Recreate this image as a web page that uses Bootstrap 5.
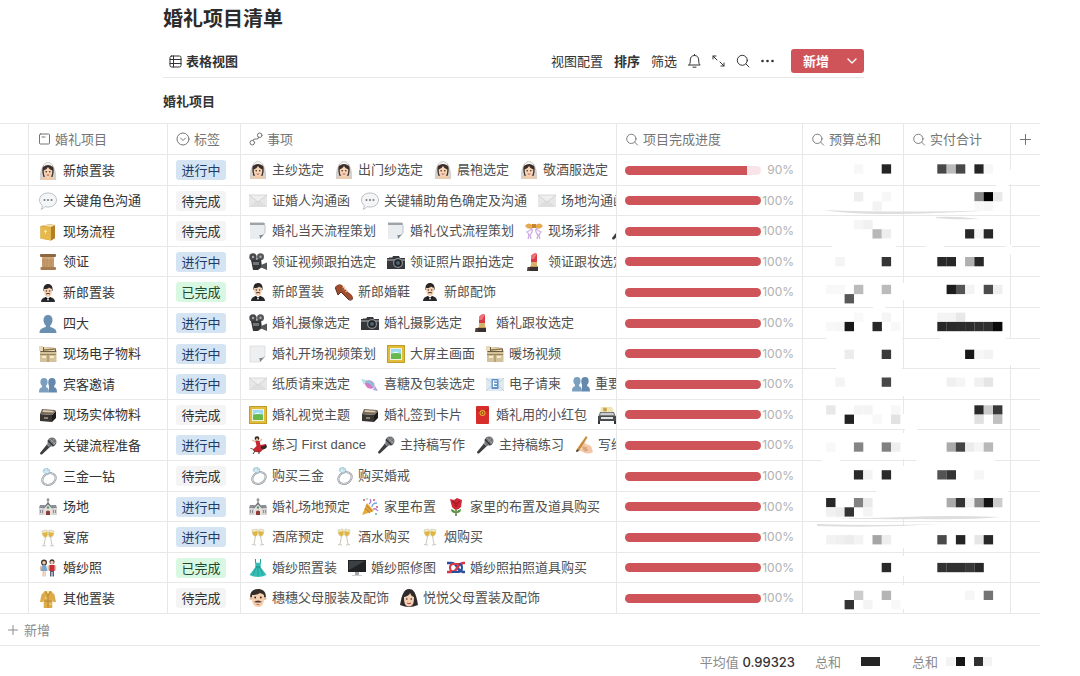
<!DOCTYPE html>
<html lang="zh-CN">
<head>
<meta charset="utf-8">
<meta name="viewport" content="width=device-width, initial-scale=1">
<title>婚礼项目清单</title>
<link href="https://cdn.jsdelivr.net/npm/bootstrap@5.3.0/dist/css/bootstrap.min.css" rel="stylesheet">
<style>
  :root { --line: #e8e8e8; --brand: #cf5459; }
  body { font: 400 13px/20px "Inter", "Noto Sans CJK SC", sans-serif; color: #333; background: #fff; overflow-x: hidden; }
  .page-head { padding: 5px 216px 12px 163px; }
  .page-title { font-size: 20px; line-height: 28px; font-weight: 700; color: #2b2b2b; margin-bottom: 12px; }
  .toolbar { height: 33px; border-bottom: 1px solid var(--line); }
  .tools { gap: 11px; }
  .tool, .view-tab { border: 0; background: none; padding: 0; color: #333; white-space: nowrap; }
  .view-tab { font-weight: 700; padding-left: 6px; gap: 4px; }
  .tool svg, .view-tab svg { display: block; }
  .ln { fill: none; stroke: currentColor; stroke-linecap: round; stroke-linejoin: round; }
  .add-group { height: 24px; margin-left: 6px; }
  .add-group .btn { --bs-btn-font-size: 13px; --bs-btn-line-height: 20px; --bs-btn-color: #fff; --bs-btn-bg: var(--brand); --bs-btn-hover-bg: #bd484d; --bs-btn-hover-color: #fff; --bs-btn-border-width: 0; --bs-btn-border-radius: 3px; padding: 0; font-weight: 700; }
  .add-main { width: 50px; }
  .add-more { width: 24px; }
  .sub-title { font-size: 13px; line-height: 20px; font-weight: 700; margin: 13px 0 0; }
  .sheet { margin-right: 40px; position: relative; }
  .grid-table { width: 100%; table-layout: fixed; border-collapse: separate; border-spacing: 0; border-top: 1px solid var(--line); }
  .grid-table th, .grid-table td { padding: 0 8px; border-bottom: 1px solid var(--line); overflow: hidden; white-space: nowrap; vertical-align: middle; }
  .grid-table thead th, .grid-table tbody td { border-right: 1px solid var(--line); }
  .grid-table thead th:last-child, .grid-table tbody td:last-child { border-right: 0; }
  .grid-table th { height: 31px; font-weight: 400; color: #757575; }
  .grid-table td { height: 31px; }
  .grid-table tbody tr:nth-child(5n+2) td, .grid-table tbody tr:nth-child(5n+4) td { height: 30px; }
  .grid-table .name-cell, .grid-table thead .name-cell { padding-left: 10px; }
  .emo { width: 18px; height: 18px; flex: none; display: block; }
  .entry { gap: 5px; color: #505050; font-family: "Liberation Sans", "Noto Sans CJK SC", sans-serif; }
  .entry-row { gap: 11px; }
  .name-cell .entry { gap: 6px; color: #333; padding-top: 1px; }
  .tag { width: 50px; border-radius: 3px; text-align: center; }
  .tag-doing { background: #d5e4f3; color: #1d3c69; }
  .tag-todo { background: #f4f4f4; }
  .tag-done { background: #d9f8e2; color: #21492f; }
  .meter { height: 9px; width: 136px; border-radius: 5px; background: #f8e4e9; }
  .meter .progress-bar { background: var(--brand); }
  .pct { font-size: 12px; color: #b0b0b0; }
  .grid-table tfoot td { border-bottom: 0; color: #8b8b8b; height: 31px; }
  .grid-table tfoot .add-row td { border-bottom: 1px solid var(--line); height: 32px; }
  .add-line { gap: 6px; color: #8b8b8b; }
  .total { color: #333; font-weight: 500; }
  .mosaic { position: absolute; top: 31px; right: 0; pointer-events: none; }
</style>
</head>
<body>

<svg width="0" height="0" class="position-absolute" aria-hidden="true">
  <symbol id="bride" viewBox="0 0 18 18"><path d="M1 18C0 8 4 0 9 0s9 8 8 18z" fill="#d3d1ce"/><path d="M3.500 11C2.500 3 6 1.500 9 1.500s6.500 1.500 5.500 9.500l-1 4h-9z" fill="#3b2e2b"/><path d="M4 5q5-4 10 0l-1-2.500Q9-1 5 2.500z" fill="#f3f3f3"/><path d="M3 18q0-3 4-4h4q4 1 4 4z" fill="#eecbab"/><path d="M4.700 8.500q3.300-1 4.300-3.500 1 2.500 4.300 3.500c0 5-1.300 7-4.300 7s-4.300-2-4.300-7z" fill="#f6d3b4"/><circle cx="7.200" cy="9.800" r=".8" fill="#3a2a24"/><circle cx="10.800" cy="9.800" r=".8" fill="#3a2a24"/><path d="M7.700 12.800q1.300 1 2.600 0" stroke="#c3554d" fill="none"/></symbol>
  <symbol id="speech" viewBox="0 0 18 18"><path d="M9 1c5 0 8.500 3 8.500 7s-3.500 7-8.500 7c-1 0-2 0-3-.4Q4.500 17 2 17.300q1.500-1.500 1.200-4C1.500 12 .5 10 .5 8 .5 4 4 1 9 1z" fill="#f4f5f6" stroke="#bcc0c4"/><circle cx="5.500" cy="8" r="1" fill="#777"/><circle cx="9" cy="8" r="1" fill="#777"/><circle cx="12.500" cy="8" r="1" fill="#777"/></symbol>
  <symbol id="ledger" viewBox="0 0 18 18"><path d="M1.500 3l10-2L16 2.500V15l-4 2.500L1.500 15.500z" fill="#c8922e"/><path d="M1.500 3L12 4.500v13L1.500 15.500z" fill="#e5b94e"/><path d="M12 4.500L16 2.500V15l-4 2.500z" fill="#b67e25"/><path d="M3 2.700l8.500-1.500L15 2.600l-3.200 1.300z" fill="#f3e3b3"/><path d="M5 8l3 .5M6.500 7v3.500" stroke="#fbe9a7"/></symbol>
  <symbol id="scroll" viewBox="0 0 18 18"><path d="M3 3h12v12H3z" fill="#c59a6b"/><path d="M5 3v12M8 3v12M12 3v12" stroke="#b98c5d"/><rect x="1" y="1" width="16" height="3" rx="1" fill="#8f6742"/><rect x="1.500" y="14" width="15.500" height="3" rx="1" fill="#a77b50"/><path d="M3 5h12" stroke="#dbb78b"/></symbol>
  <symbol id="groom" viewBox="0 0 18 18"><path d="M2 18q0-4 5-5h4q5 1 5 5z" fill="#26282b"/><path d="M7 13h4l-2 4z" fill="#fff"/><path d="M9 14.500L6.500 13v3.200zM9 14.500l2.500-1.500v3.200z" fill="#111"/><path d="M4.500 7C4 2 6 0 9 0s5 2 4.500 7z" fill="#2c2724"/><path d="M5 5q4 0 5-1.500Q12 4.500 13 5c0 5-1 8-4 8S5 10 5 5z" fill="#f1cfb0"/><circle cx="7.300" cy="7" r=".7" fill="#333"/><circle cx="10.700" cy="7" r=".7" fill="#333"/><path d="M7 10q2-1.300 4 0" stroke="#54342a" fill="none"/></symbol>
  <symbol id="bust" viewBox="0 0 18 18"><path d="M9 0c3 0 4.500 2 4.500 5 0 2.500-1 4.500-2.300 5.500v1.500c3 1 6.300 1.500 6.300 6H.5c0-4.500 3.300-5 6.300-6v-1.500C5.500 9.500 4.500 7.500 4.500 5 4.500 2 6 0 9 0z" fill="#6b8fb1"/></symbol>
  <symbol id="cardbox" viewBox="0 0 18 18"><path d="M1 7h16.500v10H1z" fill="#d3c19a"/><path d="M1 7l3-5 12.500 1 1 4z" fill="#6b5b43"/><path d="M0 1h4v5H0zM5 2l11 1v3H5z" fill="#e9dbb9"/><path d="M1 9.500h16M9 9v8" stroke="#9a8458"/><path d="M11 12h4M3 12h4" stroke="#f5ecd1" stroke-width="2"/><path d="M5 5l11-1" stroke="#907748" stroke-width="1.500"/></symbol>
  <symbol id="busts" viewBox="0 0 18 18"><path d="M13 2c2.500 0 3.700 1.600 3.700 4 0 1.800-.6 3-1.500 3.800v1.400c2 .6 2.800 1.500 2.800 5.300h-8V9.800C9.500 9 9.300 7.800 9.300 6c0-2.400 1.200-4 3.700-4z" fill="#6489ac"/><path d="M5 2c2.400 0 3.600 1.600 3.600 4 0 1.800-.6 3-1.500 3.800v1.400c2 .6 2.900 1.500 2.900 5.300H0c0-3.800 1-4.700 3-5.300V9.800C2 9 1.400 7.800 1.400 6 1.400 3.600 2.600 2 5 2z" fill="#7b9fbf"/></symbol>
  <symbol id="filebox" viewBox="0 0 18 18"><path d="M1 8l12 1v7L1 15z" fill="#393531"/><path d="M13 9l4-4v7l-4 4z" fill="#1f1d1b"/><path d="M1 8l2-5 13 1 1 1-4 4z" fill="#75695a"/><path d="M4 4l11 1-1 1.500L3.500 6z" fill="#d9ccb0"/><path d="M5 11h4v2H5z" fill="#89837a"/></symbol>
  <symbol id="mic" viewBox="0 0 18 18"><path d="M9.500 5.500l3 3L3 17.500Q1 18 1 16z" fill="#3c3d40"/><path d="M8 7l2.500 2.500" stroke="#999" stroke-width="1.500"/><circle cx="13" cy="5" r="4.500" fill="#717477"/><path d="M9.500 4l5 5M11 2l5.500 5.500M10 7.500L15.500 2M12.500 9L17 4.500" stroke="#b2b5b8" stroke-width=".6"/><path d="M9 3.500l5.500 5.500" stroke="#303235" stroke-width="1.500"/></symbol>
  <symbol id="ring" viewBox="0 0 18 18"><ellipse cx="10" cy="11" rx="7" ry="5.500" transform="rotate(-30 10 11)" fill="none" stroke="#8e9499" stroke-width="2"/><ellipse cx="10" cy="11" rx="7" ry="5.500" transform="rotate(-30 10 11)" fill="none" stroke="#dfe3e6" stroke-width=".8"/><path d="M5 1l4-.5 2 2L9 6.500 4 4z" fill="#b9dce9" stroke="#86b4c8" stroke-width=".6"/><path d="M4 4h6M7 1v4" stroke="#f2fbff" stroke-width=".6"/></symbol>
  <symbol id="church" viewBox="0 0 18 18"><path d="M9 0v6M7.500 2h3" stroke="#777"/><path d="M0 10h5v7H0zM13 10h5v7h-5z" fill="#d8d4d1"/><path d="M0 10l1-3h5l-1 3zM13 10l-1-3h5l1 3z" fill="#8b8f97"/><path d="M5 17V9l4-4 4 4v8z" fill="#e6e1de"/><path d="M4 10l5-6 5 6-1 .5-4-4-4 4z" fill="#747985"/><path d="M7 17v-3.500q2-2 4 0V17z" fill="#8e3e37"/><circle cx="9" cy="9.500" r="1.200" fill="#596"/><path d="M1.500 12v3M3.500 12v3M14.500 12v3M16.500 12v3" stroke="#8a8f9c"/></symbol>
  <symbol id="cheers" viewBox="0 0 18 18"><path d="M3 2l5-1q1.500 6-1 7.500Q3.500 9 3 2zM15 2l-5-1Q8.500 7 11 8.500 14.500 9 15 2z" fill="#f5edc5" stroke="#c8c2a5" stroke-width=".6"/><path d="M3.300 4l5-1q.5 4.500-1.500 5.200Q4 8 3.300 4zM14.700 4l-5-1q-.5 4.500 1.500 5.200Q14 8 14.700 4z" fill="#dfb440"/><path d="M6.500 8.500L5 16M3 16.500l4 .5M11.500 8.500L13 16M15 16.500l-4 .5" stroke="#cdc7ba" fill="none"/></symbol>
  <symbol id="couple" viewBox="0 0 18 18"><circle cx="5" cy="3.500" r="3" fill="#423832"/><circle cx="5" cy="3.800" r="1.800" fill="#edc8aa"/><path d="M3 6h4l1.500 6h-7z" fill="#7ba7cb"/><path d="M3.500 12h1.300v5.500H3.500zM5.500 12h1.200v5.500H5.500z" fill="#e3b99c"/><circle cx="13" cy="2.800" r="2.500" fill="#423832"/><circle cx="13" cy="3.500" r="1.700" fill="#edc8aa"/><path d="M10.300 6h5.400v6h-5.400z" fill="#c72f37"/><path d="M11 12h4v5.500h-1.500V13h-1v4.500H11z" fill="#51617a"/><path d="M9.200 6.500v5M16.500 6.500v5M1.700 7v4" stroke="#e3b99c" stroke-width="1.300"/></symbol>
  <symbol id="robe" viewBox="0 0 18 18"><path d="M6 1h6l3.500 3.500L17 12h-3l-.7-2v8H4.700v-8L4 12H1l1.500-7.500z" fill="#dcac4b"/><path d="M6 1l3 5 3-5M9 6v12M5 11h8" stroke="#b07f2c" fill="none" stroke-width=".8"/><path d="M7 1h4L9 4z" fill="#f4d792"/><circle cx="6.500" cy="8" r="1" fill="#f2d078"/><circle cx="11.500" cy="14" r="1" fill="#f2d078"/></symbol>
  <symbol id="mail" viewBox="0 0 18 18"><path d="M0 3h18v12H0z" fill="#e7e7e8"/><path d="M0 15l7-6h4l7 6z" fill="#dededf"/><path d="M0 3l9 7 9-7z" fill="#efefef" stroke="#c9cacc" stroke-width=".7"/></symbol>
  <symbol id="notepad" viewBox="0 0 18 18"><path d="M1 2h15v10l-5 5H1z" fill="#e9edf0"/><path d="M16 11l-5 6q0-3-1-4 3 1 6-2z" fill="#768593"/><path d="M1 1h15v2H1z" fill="#b0b7bc"/><path d="M2 0v3M4 0v3M6 0v3M8 0v3M10 0v3M12 0v3M14 0v3" stroke="#6f777d" stroke-width=".6"/><path d="M16 3v8" stroke="#bcc3c8"/></symbol>
  <symbol id="page" viewBox="0 0 18 18"><path d="M1 1h15v11l-5 5H1z" fill="#eeeff0" stroke="#cfd1d3" stroke-width=".6"/><path d="M16 11l-5 6q0-3-1-4 3 1 6-2z" fill="#777e86"/></symbol>
  <symbol id="ribbon" viewBox="0 0 18 18"><path d="M9 4Q3-1 0 4l2 2q3 2 7-1 4 3 7 1l2-2Q15-1 9 4z" fill="#e7a94d"/><path d="M7 2h4v4H7z" fill="#c7862d"/><path d="M7 6q-2 3-5 4 3 2 1 7M7 7q1 3-2 6l1 4M11 6q2 3 5 4-3 2-1 7M11 7q-1 3 2 6l-1 4" stroke="#cdaee4" fill="none" stroke-width="1.300"/></symbol>
  <symbol id="movie" viewBox="0 0 18 18"><circle cx="4" cy="4" r="3.700" fill="#47494c"/><circle cx="11.500" cy="3.700" r="3.500" fill="#55575a"/><circle cx="4" cy="4" r="1.200" fill="#aaa"/><circle cx="11.500" cy="3.700" r="1.200" fill="#aaa"/><path d="M2 7l10-1 1 8-4 3H4z" fill="#353739"/><path d="M12 12l6-2.500V17l-6-2.500z" fill="#55585b"/><path d="M4 9h6v3H4z" fill="#717477"/></symbol>
  <symbol id="camera" viewBox="0 0 18 18"><path d="M0 5h5l1-2h6l1 2h5v11H0z" fill="#35373a"/><path d="M0 6h18v2H0z" fill="#777a7d"/><circle cx="11" cy="10" r="5" fill="#8b8f93"/><circle cx="11" cy="10" r="3.800" fill="#202225"/><circle cx="11" cy="10" r="2" fill="#4f6472"/><path d="M2 4h3v1H2z" fill="#999"/></symbol>
  <symbol id="lipstick" viewBox="0 0 18 18"><path d="M6 3q3-4 6-2v9H6z" fill="#d93a49"/><path d="M6 3q3-4 6-2L9 6H6z" fill="#f0707a"/><path d="M6 9h6v5H6z" fill="#d6b16a"/><path d="M5 13h8v5H5z" fill="#39302f"/><path d="M2.500 14H5v4H2z" fill="#4b403c"/><path d="M5 13.500h8" stroke="#c59a54"/></symbol>
  <symbol id="shoe" viewBox="0 0 18 18"><path d="M0 4q3-4 7-2 2 4 6 7 5 3 5 6-2 3-5 1L6 9 3 12z" fill="#9d4c2e"/><path d="M0 4l3 8 3-3 8 8q3 1 4-2" fill="none" stroke="#5b3022"/><path d="M7 5l3-1M8.500 7l3-1M10 9l3-1" stroke="#e0a17a"/></symbol>
  <symbol id="frame" viewBox="0 0 18 18"><path d="M0 0h18v18H0z" fill="#e0bd3c"/><path d="M.5.5h17v17H.5z" fill="none" stroke="#c29a28"/><path d="M3 3h12v12H3z" fill="#f0f2df"/><path d="M4 4h10v10H4z" fill="#9bdaf0"/><path d="M4 9q5-2 10 0v5H4z" fill="#67b94b"/><path d="M5 8q4-3 7 0z" fill="#eef9fc"/></symbol>
  <symbol id="candy" viewBox="0 0 18 18"><path d="M0 4l6 1-3 5z" fill="#b9e1e5"/><path d="M17 16l-5-1 2-4z" fill="#b2a2dd"/><ellipse cx="9" cy="9.500" rx="5" ry="4" transform="rotate(30 9 9)" fill="#da7ac6"/><path d="M5 7q5 0 7 5M7 6q5 1 6 6" stroke="#89c3db" stroke-width="1.300" fill="none"/></symbol>
  <symbol id="email" viewBox="0 0 18 18"><path d="M0 3h18v13H0z" fill="#dfe9f0"/><path d="M0 3l9 8 9-8M0 16l7-7M18 16l-7-7" fill="none" stroke="#b9c7d1" stroke-width=".7"/><rect x="5.500" y="4" width="7" height="10" fill="#5f93c7"/><path d="M11 6H7.500v5.500H11M7.500 8.700H11" fill="none" stroke="#fff" stroke-width="1.200"/></symbol>
  <symbol id="hongbao" viewBox="0 0 18 18"><rect x="3" y="0" width="13" height="18" rx="1" fill="#d92d2b"/><path d="M3 3q6 5 13 0" fill="none" stroke="#a81e1e"/><circle cx="9.500" cy="7" r="3" fill="#e3ab32"/><circle cx="9.500" cy="7" r="1.500" fill="none" stroke="#ae2922"/></symbol>
  <symbol id="printer" viewBox="0 0 18 18"><path d="M3 1h11l2 6H2z" fill="#efe4b3"/><circle cx="7" cy="3.500" r="2" fill="#c9a04c"/><path d="M2 6h14l2 5H0z" fill="#777b7e"/><path d="M3 7h12l1 2H2z" fill="#cacccd"/><path d="M0 10h18v5H0z" fill="#494d50"/><path d="M3 11h12v2H3z" fill="#e3e4e4"/><path d="M1 15v3M17 15v3" stroke="#333" stroke-width="2"/></symbol>
  <symbol id="dancer" viewBox="0 0 18 18"><circle cx="8" cy="2.500" r="2.300" fill="#34231f"/><circle cx="8" cy="3.500" r="1.300" fill="#e9be9e"/><path d="M7 6L3 4M10 6l3-3" stroke="#e4b696" stroke-width="1.300"/><path d="M6.500 5h4l1 4 5-1q2 4-3 6l-2 2q-5 1-8-2l4-4z" fill="#c42732"/><path d="M12 10q3 1 5-2l1 3q-3 4-6 1M5 13q-3 1-4-1" fill="#332426"/><path d="M6 15l-2 3M10 15v3" stroke="#333"/></symbol>
  <symbol id="writing" viewBox="0 0 18 18"><path d="M5 8q3-4 6 0l5 2 2 6q-5 3-10 0L4 14l3-2-2-1z" fill="#f2c7a5"/><path d="M7 11l5 1-4 1 5 1-4 1" fill="none" stroke="#cf9875" stroke-width=".8"/><path d="M11 0l1.500 1.500L4 15l-3 1 1-3z" fill="#c68d3e"/><path d="M2 13l2 2-3 1z" fill="#3d3b39"/></symbol>
  <symbol id="party" viewBox="0 0 18 18"><path d="M1 17L6 5l7 8z" fill="#e7ac38"/><path d="M4 10l5 5M5 7l6 6.500" stroke="#c88a3a" stroke-width="1.300"/><path d="M8 6q3-2 1-5M12 11q3-1 5 2" fill="none" stroke="#b07bd2" stroke-width="1.300"/><path d="M11 9q0-4 5-4" fill="none" stroke="#75a7df" stroke-width="1.300"/><g fill="#dc5470"><circle cx="3" cy="2" r="1"/><circle cx="13" cy="2" r="1"/><circle cx="16" cy="9" r="1"/></g><g fill="#62b987"><circle cx="6" cy="1" r=".8"/><circle cx="15" cy="16" r="1"/></g></symbol>
  <symbol id="rose" viewBox="0 0 18 18"><path d="M9 9v9" stroke="#547a3b" stroke-width="1.500"/><path d="M8 15q-4 0-4-4 4 1 5 4zM10 15q4 0 4-4-4 1-5 4z" fill="#5a923d"/><path d="M3 1l4 1 3-2 5 2-1 7q-5 5-9 0z" fill="#cf2735"/><path d="M5 3q4 5 8 0M7 3l2 6 3-6" stroke="#a21a27" fill="none"/></symbol>
  <symbol id="dress" viewBox="0 0 18 18"><path d="M6.500 0v4M11.500 0v4" stroke="#219e98"/><path d="M6 3l3 1 3-1-.5 5 6 8q-8.500 4-17 0l6-8z" fill="#35bdb5"/><path d="M7 9L4 16M9 9v8M11 9l3 7" stroke="#1f9f99" stroke-width=".8"/><path d="M6.500 8h5" stroke="#12817c"/></symbol>
  <symbol id="monitor" viewBox="0 0 18 18"><path d="M0 1h18v12H0z" fill="#202224"/><path d="M1 2h16L1 11z" fill="#3c4044"/><path d="M7 13h4v3H7z" fill="#a5a9ad"/><path d="M4 16h10v1H4z" fill="#cccfd1"/></symbol>
  <symbol id="knot" viewBox="0 0 18 18"><path d="M0 4h4q4 0 6 4t6 5h2" stroke="#294f9e" stroke-width="2.500" fill="none"/><path d="M0 13h4q4 0 6-4t6-5h2" stroke="#d43945" stroke-width="2.500" fill="none"/><path d="M13 5H6Q3 5 3 8.500T6 12.500" stroke="#d43945" stroke-width="2" fill="none"/><path d="M5 13h7q3-1 3-4.500t-3-3.500" stroke="#294f9e" stroke-width="2" fill="none"/></symbol>
  <symbol id="man" viewBox="0 0 18 18"><path d="M1.500 10C0 3 4 0 9 0s9 3 7.500 10z" fill="#352b28"/><circle cx="2" cy="9.500" r="1.500" fill="#e9c19d"/><circle cx="16" cy="9.500" r="1.500" fill="#e9c19d"/><path d="M3 6q6 0 8-2 3 1 4 2c.5 7-1 12-6 12S2.500 13 3 6z" fill="#f3cfae"/><circle cx="6.200" cy="8.500" r=".9" fill="#322"/><circle cx="11.800" cy="8.500" r=".9" fill="#322"/><path d="M5 13q4-3 8 0-4 1-8 0z" fill="#54372c"/><path d="M7.500 15.500h3" stroke="#c3776a"/></symbol>
  <symbol id="woman" viewBox="0 0 18 18"><path d="M0 16C2 5 4 0 9 0s7 4 9 16q-9 4-18 0z" fill="#302a2b"/><path d="M4 8q5-1 6-4 1 3 4 4c0 6-1 9.500-5 9.500S4 14 4 8z" fill="#f4d0b4"/><circle cx="6.800" cy="10" r=".8" fill="#322"/><circle cx="11.200" cy="10" r=".8" fill="#322"/><path d="M7 14q2 1.500 4 0" stroke="#bc4149" fill="none"/></symbol>
  <symbol id="search" viewBox="0 0 14 14"><circle cx="6.300" cy="6.300" r="5" class="ln"/><path class="ln" d="M10 10l3 3"/></symbol>
</svg>

<header class="page-head">
  <h1 class="page-title">婚礼项目清单</h1>
  <div class="toolbar d-flex align-items-center justify-content-between">
    <button type="button" class="view-tab d-flex align-items-center">
      <svg width="13" height="13" viewBox="0 0 13 13" class="ln" aria-hidden="true"><rect x="1" y="1" width="11" height="11" rx="1.500"/><path d="M4.500 1v11M1 4.500h11M1 8.500h11"/></svg>
      <span>表格视图</span>
    </button>
    <div class="tools d-flex align-items-center">
      <button type="button" class="tool">视图配置</button>
      <button type="button" class="tool fw-bold">排序</button>
      <button type="button" class="tool">筛选</button>
      <button type="button" class="tool" aria-label="通知"><svg width="13" height="14" viewBox="0 0 13 14" class="ln"><path d="M.8 11h11.400c-1.200-1-1.500-2-1.500-5 0-2.700-1.600-4.500-4.200-4.500S2.300 3.300 2.300 6c0 3-.3 4-1.500 5zM5 13.200h3M6.500.5v1"/></svg></button>
      <button type="button" class="tool" aria-label="全屏"><svg width="13" height="14" viewBox="0 0 13 14" class="ln"><path d="M1 5V2h3M1 2l4 4M12 9v3H9M12 12L8 8"/></svg></button>
      <button type="button" class="tool" aria-label="搜索"><svg width="14" height="14"><use href="#search"/></svg></button>
      <button type="button" class="tool" aria-label="更多"><svg width="13" height="14" viewBox="0 0 13 14" fill="#333"><circle cx="1.500" cy="7" r="1.300"/><circle cx="6.500" cy="7" r="1.300"/><circle cx="11.500" cy="7" r="1.300"/></svg></button>
      <div class="btn-group add-group">
        <button type="button" class="btn add-main">新增</button>
        <button type="button" class="btn add-more d-flex align-items-center justify-content-center" aria-label="更多新增方式"><svg width="10" height="6" viewBox="0 0 10 6" class="ln" stroke-width="1.400"><path d="M1 1l4 4 4-4"/></svg></button>
      </div>
    </div>
  </div>
  <h2 class="sub-title">婚礼项目</h2>
</header>

<main class="sheet">
  <table class="grid-table">
    <colgroup><col style="width:29px"><col style="width:139px"><col style="width:73px"><col><col style="width:186px"><col style="width:101px"><col style="width:107px"><col style="width:29px"></colgroup>
    <thead>
      <tr>
        <th></th>
        <th scope="col" class="name-cell"><span class="d-flex align-items-center gap-1"><svg width="12" height="12" viewBox="0 0 12 12" class="ln"><rect x=".5" y="1" width="10" height="10" rx="1"/><path d="M3 4h3"/></svg><span>婚礼项目</span></span></th>
        <th scope="col"><span class="d-flex align-items-center gap-1"><svg width="14" height="14" viewBox="0 0 14 14" class="ln"><circle cx="7" cy="7" r="6"/><path d="M4.500 6L7 8.500 9.500 6"/></svg><span>标签</span></span></th>
        <th scope="col"><span class="d-flex align-items-center gap-1"><svg width="14" height="14" viewBox="0 0 14 14" class="ln"><circle cx="3.300" cy="10.700" r="2.300"/><circle cx="10.700" cy="3.300" r="2.300"/><path d="M4 8.500q0-2 3-1.500t2.800-2"/></svg><span>事项</span></span></th>
        <th scope="col"><span class="d-flex align-items-center gap-1"><svg width="14" height="13"><use href="#search"/></svg><span>项目完成进度</span></span></th>
        <th scope="col"><span class="d-flex align-items-center gap-1"><svg width="14" height="13"><use href="#search"/></svg><span>预算总和</span></span></th>
        <th scope="col"><span class="d-flex align-items-center gap-1"><svg width="14" height="13"><use href="#search"/></svg><span>实付合计</span></span></th>
        <th class="p-0"><button type="button" class="tool d-block mx-auto text-secondary" aria-label="添加列"><svg width="11" height="11" viewBox="0 0 11 11" class="ln"><path d="M5.500.5v10M.5 5.500h10"/></svg></button></th>
      </tr>
    </thead>
    <tbody id="rows"></tbody>
    <tfoot>
      <tr class="add-row"><td colspan="8"><button type="button" class="tool add-line d-flex align-items-center"><svg width="10" height="10" viewBox="0 0 10 10" class="ln"><path d="M5 .5v9M.5 5h9"/></svg><span>新增</span></button></td></tr>
      <tr>
        <td colspan="4"></td>
        <td class="text-end">平均值 <span class="total">0.99323</span></td>
        <td><span class="d-flex align-items-center ps-1">总和<svg class="ms-auto me-3" width="19" height="9"><path d="M0 0h19v9H0z" fill="#252525"/></svg></span></td>
        <td><span class="d-flex align-items-center">总和<svg class="ms-2" width="46" height="9"><path d="M0 0h9v9H0zM37 0h9v9h-9z" fill="#f3f3f3"/><path d="M10 0h9v9h-9z" fill="#151515"/><path d="M28 0h9v9h-9z" fill="#303030"/></svg></span></td>
        <td></td>
      </tr>
    </tfoot>
  </table>
  <svg class="mosaic" id="mosaic" width="238" height="459" viewBox="802 154 238 459" aria-label="金额已打码"></svg>
</main>

<script>
  // Each row: icon, name, status, progress, linked items
  const rows = [
    ['bride', '新娘置装', 'doing', 90, 'bride:主纱选定|bride:出门纱选定|bride:晨袍选定|bride:敬酒服选定'],
    ['speech', '关键角色沟通', 'todo', 100, 'mail:证婚人沟通函|speech:关键辅助角色确定及沟通|mail:场地沟通函'],
    ['ledger', '现场流程', 'todo', 100, 'notepad:婚礼当天流程策划|notepad:婚礼仪式流程策划|ribbon:现场彩排|mic:'],
    ['scroll', '领证', 'doing', 100, 'movie:领证视频跟拍选定|camera:领证照片跟拍选定|lipstick:领证跟妆选定'],
    ['groom', '新郎置装', 'done', 100, 'groom:新郎置装|shoe:新郎婚鞋|groom:新郎配饰'],
    ['bust', '四大', 'doing', 100, 'movie:婚礼摄像选定|camera:婚礼摄影选定|lipstick:婚礼跟妆选定'],
    ['cardbox', '现场电子物料', 'doing', 100, 'page:婚礼开场视频策划|frame:大屏主画面|cardbox:暖场视频'],
    ['busts', '宾客邀请', 'doing', 100, 'mail:纸质请柬选定|candy:喜糖及包装选定|email:电子请柬|busts:重要'],
    ['filebox', '现场实体物料', 'todo', 100, 'frame:婚礼视觉主题|filebox:婚礼签到卡片|hongbao:婚礼用的小红包|printer:'],
    ['mic', '关键流程准备', 'doing', 100, 'dancer:练习 First dance|mic:主持稿写作|mic:主持稿练习|writing:写给'],
    ['ring', '三金一钻', 'todo', 100, 'ring:购买三金|ring:购买婚戒'],
    ['church', '场地', 'doing', 100, 'church:婚礼场地预定|party:家里布置|rose:家里的布置及道具购买'],
    ['cheers', '宴席', 'doing', 100, 'cheers:酒席预定|cheers:酒水购买|cheers:烟购买'],
    ['couple', '婚纱照', 'done', 100, 'dress:婚纱照置装|monitor:婚纱照修图|knot:婚纱照拍照道具购买'],
    ['robe', '其他置装', 'todo', 100, 'man:穗穗父母服装及配饰|woman:悦悦父母置装及配饰']
  ];
  const status = { doing: '进行中', todo: '待完成', done: '已完成' };
  const entry = (icon, text) =>
    `<span class="entry d-flex align-items-center flex-shrink-0"><svg class="emo" aria-hidden="true"><use href="#${icon}"/></svg>${text ? `<span>${text}</span>` : ''}</span>`;
  document.getElementById('rows').innerHTML = rows.map(([icon, name, st, pct, items]) => `
    <tr>
      <td></td>
      <td class="name-cell">${entry(icon, name)}</td>
      <td><div class="tag tag-${st}">${status[st]}</div></td>
      <td class="pe-0"><div class="entry-row d-flex">${items.split('|').map(i => entry(...i.split(':'))).join('')}</div></td>
      <td class="pe-1"><div class="d-flex align-items-center justify-content-between pe-1"><div class="progress meter" role="progressbar" aria-label="${name}" aria-valuenow="${pct}" aria-valuemin="0" aria-valuemax="100"><div class="progress-bar" style="width:${pct}%"></div></div><span class="pct">${pct}%</span></div></td>
      <td></td><td></td><td></td>
    </tr>`).join('');

  // Pixelated amounts: mosaic line -> "column:grey" blocks on a 9.27px raster
  const blocks = {
    0: '3:f7 6:25 12:48 13:bb 14:48 16:25 17:f7', 3: '3:ee 6:f7 16:88 17:00 18:e8', 4: '5:f3 16:f9 17:f7',
    6: '3:f6 4:f1', 7: '5:b8 6:ee 15:28 16:f5 17:28', 10: '1:f4 6:35 12:28 13:28 15:b0 16:28',
    13: '0:f8 1:f8 3:bb 6:bb 13:1c 14:55 15:f3 17:4c 18:ee', 14: '2:58', 16: '3:f9 6:f5 12:f4 13:f4 14:e8',
    17: '0:f8 1:f6 2:18 5:28 7:f8 12:28 13:2a 14:2c 15:2c 16:30 17:30 18:0a', 20: '2:ec 6:3a 15:18 16:f7 17:f3',
    23: '1:f4 6:48 13:f0 14:f5 16:f1 17:e5', 26: '0:e8 3:f4 4:f4 7:f7 16:2a 17:cc 18:38', 27: '2:22 5:f8 7:e2 16:e0 18:c0',
    30: '0:f8 3:85 6:80 7:ee 13:aa 14:44 15:ec 16:f5 17:b8', 33: '3:2a 4:f3 6:2a 12:54 13:34 16:f6',
    36: '0:28 3:82 4:ea 13:aa 14:34 15:f0 16:8c 17:14 18:cc', 37: '0:f1 1:ec 2:34 4:f4',
    40: '0:f2 1:f0 2:ec 3:f3 5:a5 6:ee 12:4a 14:24 16:e6 17:28', 43: '6:2a 12:32 13:30 14:30 15:38 16:28',
    46: '3:cc 6:b4 15:f6 17:74', 47: '2:34 4:f4 7:f8'
  };
  // Areas of the ruling wiped out by the eraser: x, y, width, height
  const wiped = [[900,283,6,17],[900,369,6,27],[900,414,6,15],[900,433,6,26],[900,466,6,52],[900,526,6,22],[900,556,6,20],[900,585,6,24],
    [1006,170,6,14],[1006,245,6,9],[1006,339,6,26],[996,182,12,4],[832,243,64,5],[926,243,18,5],[873,305,12,5],[826,335,76,5],[940,335,66,5],
    [836,366,66,5],[905,427,12,5],[822,458,18,5],[916,458,79,5],[876,488,132,5]];
  const P = 9.27;
  let art = wiped.map(([x, y, w, h]) => `<rect x="${x}" y="${y}" width="${w}" height="${h}" fill="#fff"/>`).join('');
  art += '<path d="M824 210q80 3 174 0-70 4-110 4-40 0-64-4zM936 217q20-1 44 2-26 1-44-1z" fill="#dedede"/><path d="M822 517q30 2 80 0t98 0q-30 3-78 2-60 1-100-2zM817 524q60 2 123 0-60 4-123 2z" fill="#dedede"/>';
  for (const [j, line] of Object.entries(blocks))
    for (const b of line.split(' ')) {
      const [k, g] = b.split(':');
      art += `<rect x="${(826.1 + P * k).toFixed(1)}" y="${(164.3 + P * j).toFixed(1)}" width="9.4" height="9.3" fill="#${g + g + g}"/>`;
    }
  document.getElementById('mosaic').innerHTML = art;
</script>
<script src="https://cdn.jsdelivr.net/npm/bootstrap@5.3.0/dist/js/bootstrap.bundle.min.js"></script>
</body>
</html>
